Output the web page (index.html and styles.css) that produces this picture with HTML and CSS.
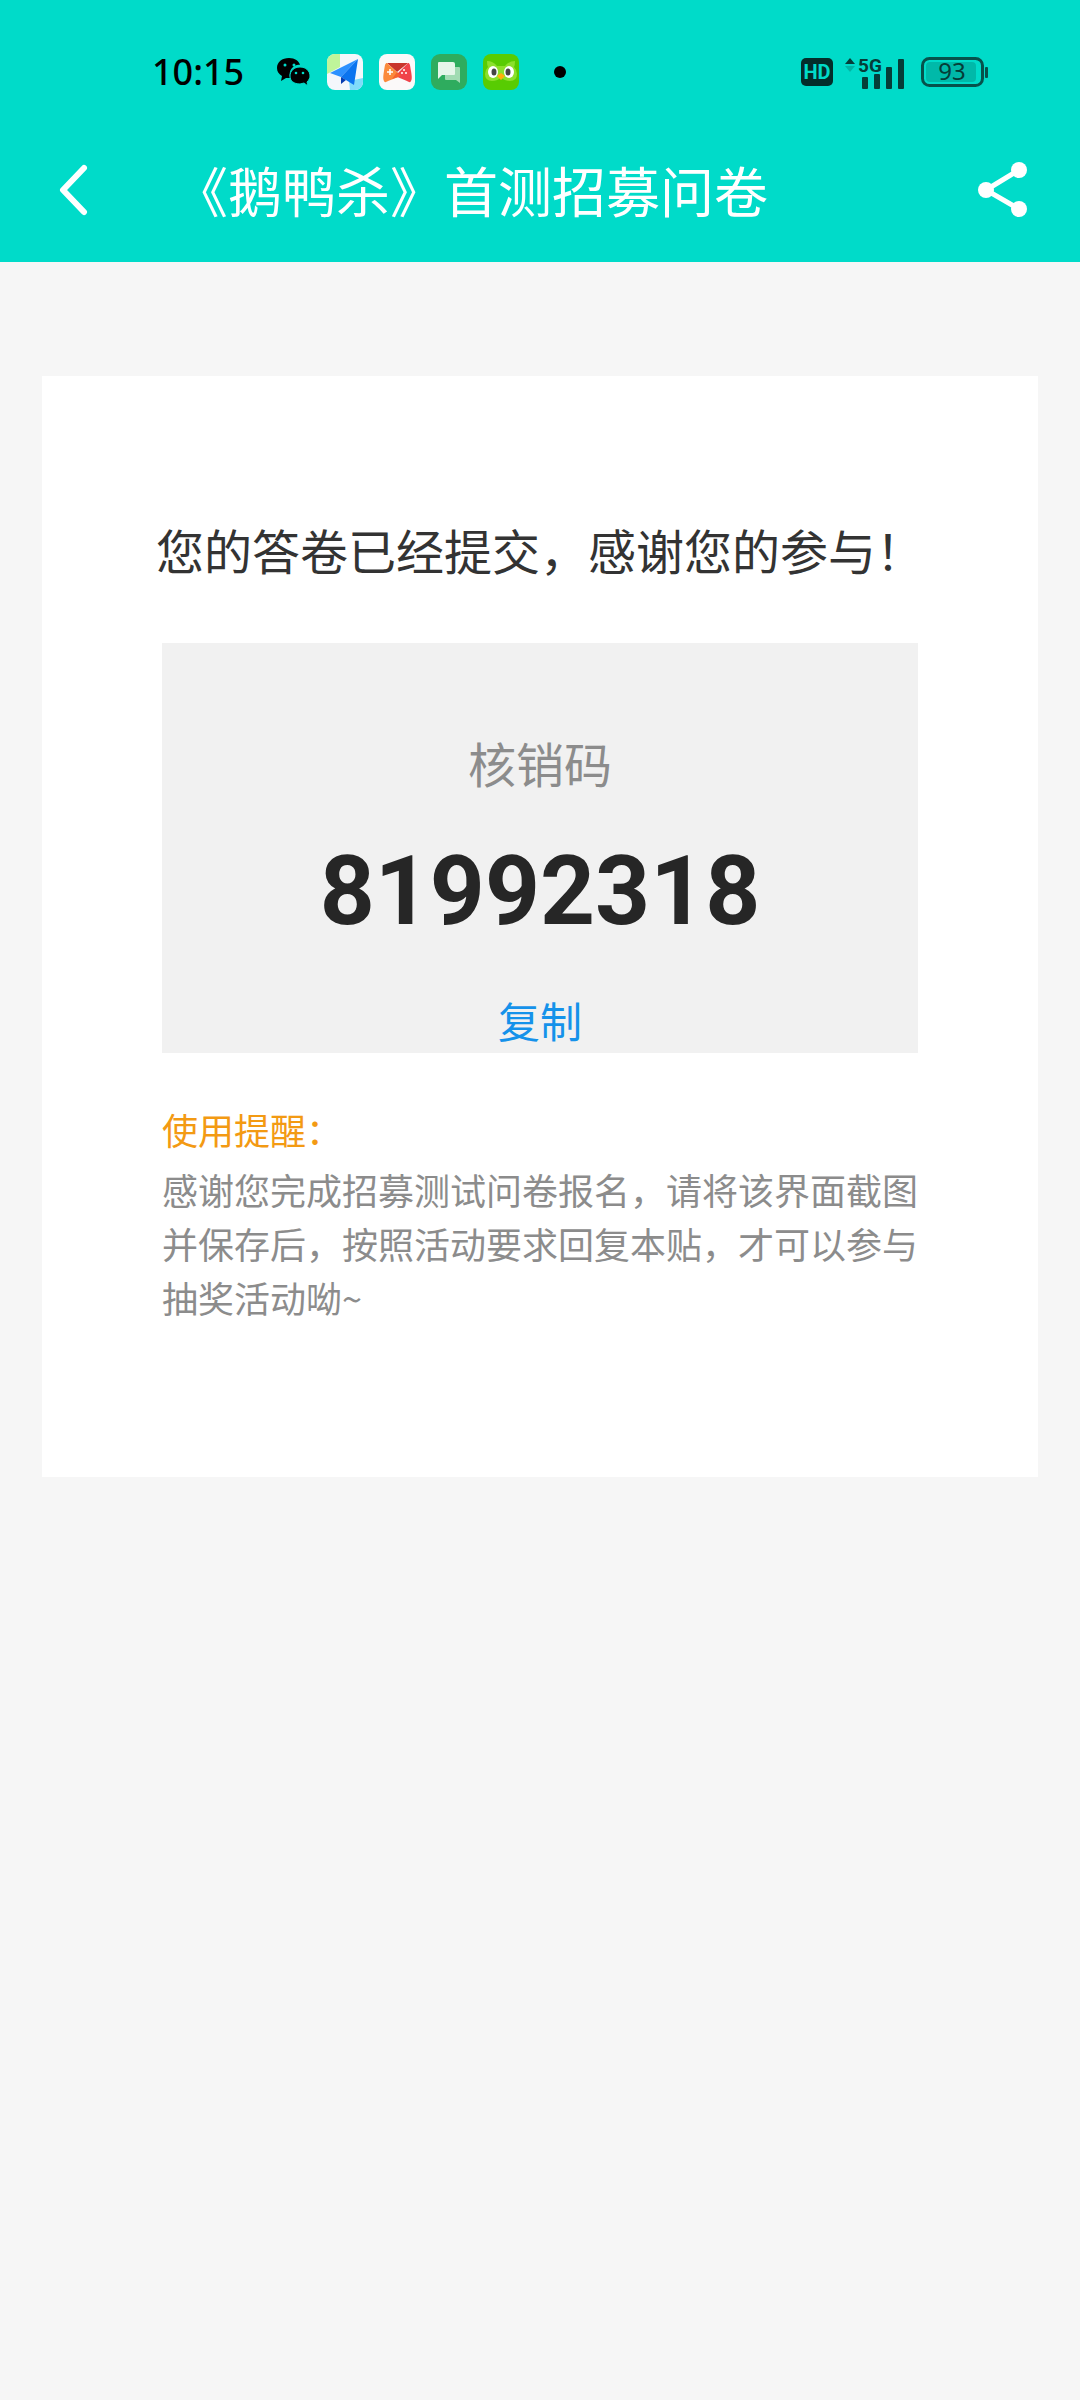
FILE: index.html
```html
<!DOCTYPE html>
<html lang="zh-CN">
<head>
	<meta charset="utf-8">
	<meta name="viewport" content="width=device-width">
	<title>《鹅鸭杀》首测招募问卷</title>
	<link rel="stylesheet" href="styles.css">
</head>
<body>
	<header class="top">
		<div class="status">
			<time class="clock">10:15</time>
			<div class="apps">
				<!-- chat bubbles -->
				<svg width="34" height="36" viewBox="0 0 34 36">
					<path d="M12 4C5 4 0 8 0 14c0 4 2 6 5 8l-1 5 5-3 4 0c-2-9 5-14 10-13C22 7 18 4 12 4z"/>
					<path d="M23 13c-6 0-10 4-10 9s4 8 10 8l4-1 4 3-1-4c2-2 3-4 3-6 0-5-4-9-10-9z" stroke="#00dbc9" stroke-width="1"/>
					<g fill="#00dbc9"><circle cx="8" cy="11" r="1.5"/><circle cx="17" cy="11" r="1.5"/><circle cx="19" cy="19" r="1.3"/><circle cx="26" cy="19" r="1.3"/></g>
				</svg>
				<!-- map -->
				<svg width="36" height="36" viewBox="0 0 36 36">
					<rect width="36" height="36" rx="8" fill="#f4f7fb"/>
					<path d="M8 0h5v13L0 20V8a8 8 0 0 1 8-8z" fill="#bff59a"/>
					<path d="M22 27l14-3v4a8 8 0 0 1-8 8h-5z" fill="#7fdcfa"/>
					<path d="M31 5L3 19l11 4z" fill="#2c91ff"/>
					<path d="M31 5L14 23l13 8z" fill="#0b74ef"/>
					<path d="M14 23v7l5-4z" fill="#073db0"/>
				</svg>
				<!-- games -->
				<svg width="36" height="36" viewBox="0 0 36 36">
					<rect width="36" height="36" rx="8" fill="#fbf9f9"/>
					<path d="M8 9h21l-11 9z" fill="#c8342c"/>
					<path d="M8 9c-2 0-2 2-3 8s-1 8 0 10 2 1 4 0l13-5L8 9z" fill="#fb8a3c"/>
					<path d="M29 9c2 0 2 2 3 8s1 8 0 10-2 1-4 0l-12-5z" fill="#f0434a"/>
					<path d="M18 18l-5 7 9-3z" fill="#f5632f"/>
					<path d="M11 15v6M8 18h6" stroke="#fff" stroke-width="1.6"/>
					<g fill="#fff"><circle cx="25" cy="16" r="1"/><circle cx="23" cy="19" r="1"/><circle cx="27" cy="19" r="1"/></g>
				</svg>
				<!-- messages -->
				<svg width="36" height="36" viewBox="0 0 36 36">
					<rect width="36" height="36" rx="9" fill="#2eac5e"/>
					<path d="M14 13h14q1 0 1 1v15l-4-3H15q-1 0-1-1z" fill="#a0dbb2"/>
					<path d="M8 8h14q2 0 2 2v10q0 1-1 1H11l-4 4V9q0-1 1-1z" fill="#e5f6e9"/>
				</svg>
				<!-- owl -->
				<svg width="36" height="36" viewBox="0 0 36 36">
					<rect width="36" height="36" rx="8" fill="#58cc02"/>
					<path d="M4 7q6 0 10 5h8q4-5 10-5 0 4-1 6 3 3 3 7 0 7-7 7-6 0-9-4-3 4-9 4-7 0-7-7 0-4 3-7-1-2-1-6z" fill="#8be02c"/>
					<ellipse cx="10" cy="18" rx="5" ry="6" fill="#fff"/><ellipse cx="26" cy="18" rx="5" ry="6" fill="#fff"/>
					<ellipse cx="11" cy="18" rx="2.5" ry="3.5" fill="#444"/><ellipse cx="25" cy="18" rx="2.5" ry="3.5" fill="#444"/>
					<path d="M18 19l4 3-4 4-4-4z" fill="#ffb00c"/>
				</svg>
				<span class="more"></span>
			</div>
			<div class="system">
				<svg width="32" height="28" viewBox="0 0 32 28">
					<rect width="32" height="28" rx="5" fill="#032e2b"/>
					<text class="hd" x="16" y="21" text-anchor="middle">HD</text>
				</svg>
				<svg class="signal" width="60" height="40" viewBox="0 -5 60 40">
					<path d="M0 7l5-6 5 6z" fill="#053d38"/>
					<path d="M0 9h10l-5 6z" fill="#00b5a4"/>
					<text class="net" x="13" y="15">5G</text>
					<g fill="#053d38"><rect x="17" y="20" width="6" height="12" rx="1"/><rect x="29" y="17" width="6" height="15" rx="1"/><rect x="41" y="10" width="6" height="22" rx="1"/><rect x="53" y="2" width="6" height="30" rx="1"/></g>
				</svg>
				<svg width="68" height="40" viewBox="0 -5 68 40">
					<rect x="1.5" y="1.5" width="60" height="27" rx="7" fill="none" stroke="#06524c" stroke-width="3"/>
					<rect x="5" y="5" width="50" height="20" rx="4" fill="#00b9a9"/>
					<rect x="64" y="10" width="3" height="11" rx="1" fill="#06524c"/>
					<text class="charge" x="31" y="23" text-anchor="middle">93</text>
				</svg>
			</div>
		</div>
		<nav class="bar">
			<button type="button" class="icon" aria-label="返回">
				<svg width="30" height="54" viewBox="0 0 30 54"><path d="M26 5L5 27l21 22" fill="none" stroke="#fff" stroke-width="6" stroke-linecap="round" stroke-linejoin="round"/></svg>
			</button>
			<h1 class="title">《鹅鸭杀》首测招募问卷</h1>
			<button type="button" class="icon" aria-label="分享">
				<svg width="50" height="56" viewBox="0 0 50 56">
					<path d="M41 8L8 28l33 19" fill="none" stroke="#fff" stroke-width="5"/>
					<g fill="#fff"><circle cx="41" cy="8" r="8"/><circle cx="8" cy="28" r="8"/><circle cx="41" cy="47" r="8"/></g>
				</svg>
			</button>
		</nav>
	</header>
	<main class="card">
		<h2 class="thanks">您的答卷已经提交，感谢您的参与！</h2>
		<section class="code">
			<div class="label">核销码</div>
			<div class="number">81992318</div>
			<button type="button" class="copy">复制</button>
		</section>
		<section class="notice">
			<h3 class="remind">使用提醒：</h3>
			<p class="text">感谢您完成招募测试问卷报名，请将该界面截图并保存后，按照活动要求回复本贴，才可以参与抽奖活动呦~</p>
		</section>
	</main>
</body>
</html>
```
FILE: styles.css
```css
body {
	margin: 0;
	background: #f6f6f6;
	font-family: "Noto Sans CJK SC", sans-serif;
	color: #333;
}

h1, h2, h3, p {
	margin: 0;
	font-weight: 400;
}

button {
	padding: 0;
	border: 0;
	background: none;
	font-family: inherit;
	cursor: pointer;
}

svg {
	display: block;
}

/* Status bar and page title */
.top {
	padding-bottom: 26px;
	background: #00dbc9;
}

.status {
	display: flex;
	align-items: center;
	height: 144px;
	padding: 0 91px 0 152px;
}

.clock {
	font: 500 36px/48px "Noto Sans", sans-serif;
	color: #000;
}

.apps {
	display: flex;
	align-items: center;
	gap: 16px;
	margin-left: 33px;
}

.more {
	width: 12px;
	height: 12px;
	margin-left: 19px;
	border-radius: 50%;
	background: #000;
}

.system {
	display: flex;
	align-items: center;
	gap: 12px;
	margin-left: auto;
}

.signal {
	margin-right: 4px;
}

.hd {
	font: 700 20px Roboto, sans-serif;
	fill: #00dbc9;
}

.net {
	font: 700 19px Roboto, sans-serif;
	fill: #053d38;
}

.charge {
	font: 400 24px "Noto Sans", sans-serif;
	fill: #053d38;
}

.bar {
	display: flex;
	align-items: center;
	height: 92px;
	padding: 0 52px 0 58px;
}

.title {
	flex: 1;
	margin-left: 86px;
	font-size: 54px;
	line-height: 80px;
	color: #fff;
}

/* Result card */
.card {
	margin: 114px 42px 0;
	padding: 137px 114px 153px;
	background: #fff;
}

.thanks {
	font-size: 48px;
	line-height: 72px;
	text-align: center;
}

.code {
	margin: 58px 6px 0;
	padding: 83px 0 2px;
	background: #f1f1f1;
	text-align: center;
}

.label {
	font-size: 48px;
	line-height: 72px;
	color: #8c8c8c;
}

.number {
	margin: 45px 0 50px;
	font: 700 96px/96px Roboto, sans-serif;
	color: #262626;
}

.copy {
	display: block;
	margin: 0 auto;
	font-size: 42px;
	line-height: 62px;
	color: #1592ea;
}

/* Reminder under the code */
.notice {
	margin: 49px 6px 0;
	font-size: 36px;
	line-height: 54px;
	color: #8c8c8c;
}

.remind {
	margin-bottom: 6px;
	font-size: 36px;
	color: #f39a13;
}
```
